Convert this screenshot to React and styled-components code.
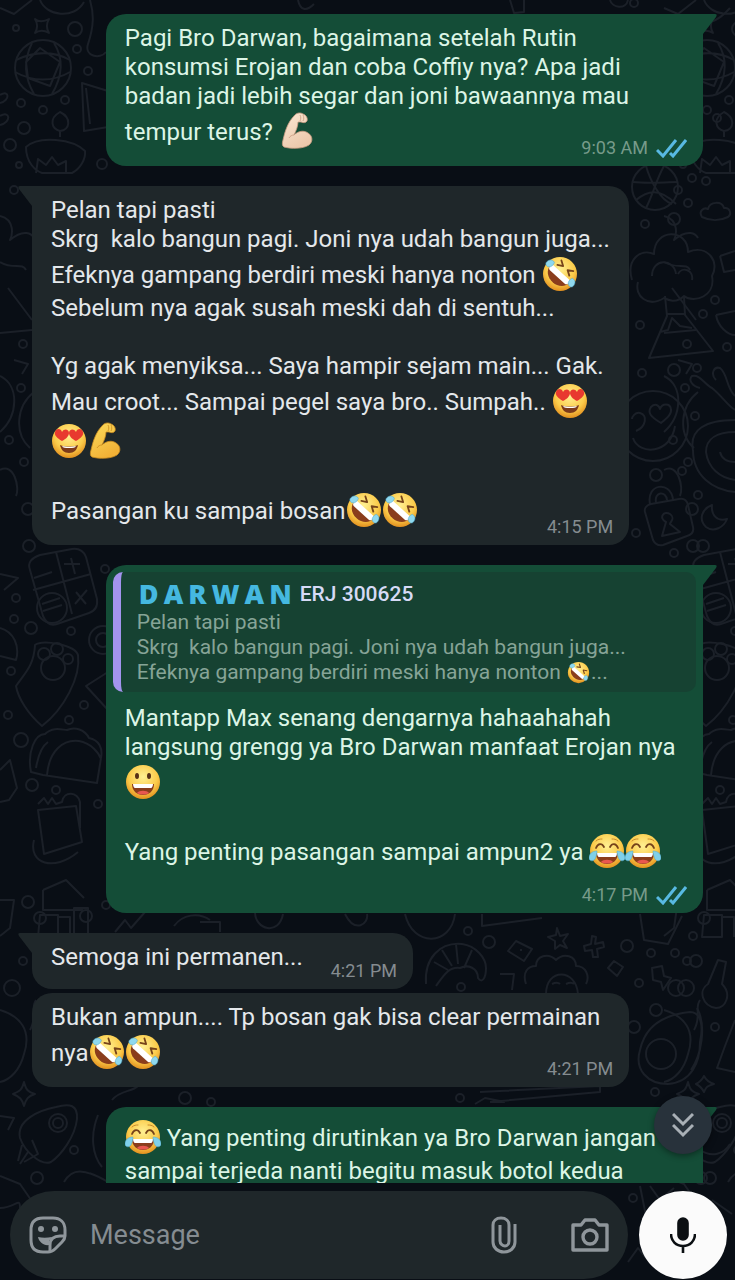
import { Fragment } from "react";
import styled, { createGlobalStyle } from "styled-components";

const GlobalStyle = createGlobalStyle`
    * {
        box-sizing: border-box;
    }

    body {
        margin: 0;
        background: #090e15;
        font-family: Roboto, "Liberation Sans", sans-serif;
    }
`;

const messages = [
    {
        out: true,
        tail: true,
        time: "9:03 AM",
        text: "Pagi Bro Darwan, bagaimana setelah Rutin konsumsi Erojan dan coba Coffiy nya? Apa jadi badan jadi lebih segar dan joni bawaannya mau tempur terus? 💪🏻",
    },
    {
        tail: true,
        time: "4:15 PM",
        text: "Pelan tapi pasti\nSkrg  kalo bangun pagi. Joni nya udah bangun juga...\nEfeknya gampang berdiri meski hanya nonton 🤣\nSebelum nya agak susah meski dah di sentuh...\n\nYg agak menyiksa... Saya hampir sejam main... Gak. Mau croot... Sampai pegel saya bro.. Sumpah.. 😍😍💪\n\nPasangan ku sampai bosan🤣🤣",
    },
    {
        out: true,
        tail: true,
        ownLine: true,
        time: "4:17 PM",
        quote: {
            brand: "DARWAN",
            name: "ERJ 300625",
            text: "Pelan tapi pasti\nSkrg  kalo bangun pagi. Joni nya udah bangun juga...\nEfeknya gampang berdiri meski hanya nonton 🤣...",
        },
        text: "Mantapp Max senang dengarnya hahaahahah langsung grengg ya Bro Darwan manfaat Erojan nya 😀\n\nYang penting pasangan sampai ampun2 ya 😂😂",
    },
    { tail: true, inline: true, joined: true, time: "4:21 PM", text: "Semoga ini permanen..." },
    {
        time: "4:21 PM",
        text: "Bukan ampun.... Tp bosan gak bisa clear permainan nya🤣🤣",
    },
    {
        out: true,
        tail: true,
        ownLine: true,
        text: "😂 Yang penting dirutinkan ya Bro Darwan jangan sampai terjeda nanti begitu masuk botol kedua",
    },
];

/* ---------- emoji ---------- */

const Tears = () => (
    <g fill="#7fd0ea" stroke="#4fa9cf" strokeWidth="0.5">
        <path d="M8 20C3 20 0 23 0 27c0 3 4 4 6 1 1-2 2-5 2-8z" />
        <path d="M28 20c5 0 8 3 8 7 0 3-4 4-6 1-1-2-2-5-2-8z" />
    </g>
);

const Grin = () => (
    <>
        <path d="M7 22h22c0 7-5 11-11 11S7 29 7 22z" fill="#8a3d1c" />
        <path d="M8 22h20c0 2-1 4-2 4H10c-1 0-2-2-2-4z" fill="#fff" />
        <path d="M12 31c2-3 10-3 12 0-3 2-9 2-12 0z" fill="#e8574f" />
    </>
);

const Face = ({ children }) => (
    <>
        <circle cx="18" cy="20" r="17" fill="url(#face)" />
        {children}
    </>
);

const Arm = ({ fill, line }) => (
    <g fill={fill} stroke={line} strokeWidth="0.8" strokeLinejoin="round">
        <path d="M15 5c2-3 6-4 9-2 3 1 5 4 4 7-1 2-4 2-6 1l-3 0c0 4-2 9-4 13 4-4 10-5 14-2 5 3 5 9 1 12-6 4-18 4-25 2-2-1-2-4-1-7C6 20 9 11 15 5z" />
        <path d="M21 4c1 2 1 4 0 6M24 4c1 2 1 4 0 6M10 27c1-2 3-3 5-3" fill="none" />
    </g>
);

const drawings = {
    "💪🏻": <Arm fill="url(#skin)" line="#c99b80" />,
    "💪": <Arm fill="url(#arm)" line="#c98a1e" />,
    "🤣": (
        <Face>
            <g transform="rotate(42 18 20)">
                <path d="M10 9l5 3-5 3M26 9l-5 3 5 3" fill="none" stroke="#76431a" strokeWidth="1.8" strokeLinecap="round" strokeLinejoin="round" />
                <path d="M5 19h26c0 8-6 12-13 12S5 27 5 19z" fill="#8a3d1c" />
                <path d="M5 18h26c0 4-1 6-3 6H8c-2 0-3-2-3-6z" fill="#fff" />
                <g fill="#8fd8ee" stroke="#4fa9cf" strokeWidth="0.5">
                    <path d="M6 15c-4-1-6 2-6 5s4 4 6 1c1-2 1-4 0-6z" />
                    <path d="M30 15c4-1 6 2 6 5s-4 4-6 1c-1-2-1-4 0-6z" />
                </g>
            </g>
        </Face>
    ),
    "😂": (
        <Face>
            <path d="M7 17c2-5 6-5 8-1M21 16c2-4 6-4 8 1" fill="none" stroke="#76431a" strokeWidth="1.8" strokeLinecap="round" />
            <path d="M7 10c2-2 4-2 6-2M23 8c2 0 4 0 6 2" fill="none" stroke="#c98a2c" strokeLinecap="round" />
            <Grin />
            <Tears />
        </Face>
    ),
    "😀": (
        <Face>
            <ellipse cx="12" cy="14" rx="2" ry="3" fill="#573016" />
            <ellipse cx="24" cy="14" rx="2" ry="3" fill="#573016" />
            <Grin />
        </Face>
    ),
    "😍": (
        <Face>
            <path d="M11 20c-5-3-8-6-7-9 1-4 6-4 7 0 2-4 7-3 7 1 0 3-3 6-7 8z" fill="#e8392f" />
            <path d="M25 20c5-3 8-6 7-9-1-4-6-4-7 0-2-4-7-3-7 1 0 3 3 6 7 8z" fill="#e8392f" />
            <path d="M9 24c5 2 13 2 18 0-1 5-4 8-9 8s-8-3-9-8z" fill="#7c3a1a" />
            <path d="M11 25c4 1 10 1 14 0-1 2-3 2-7 2s-6 0-7-2z" fill="#fff" />
        </Face>
    ),
};

const EmojiDefs = () => (
    <HiddenSvg aria-hidden="true">
        <defs>
            <radialGradient id="face" cx="0.5" cy="0.35" r="0.65">
                <stop offset="0" stopColor="#fff092" />
                <stop offset="0.65" stopColor="#fbcb4a" />
                <stop offset="1" stopColor="#e2901f" />
            </radialGradient>
            <linearGradient id="arm" x1="0" y1="0" x2="0.5" y2="1">
                <stop offset="0" stopColor="#fcdc5c" />
                <stop offset="1" stopColor="#f2b136" />
            </linearGradient>
            <linearGradient id="skin" x1="0" y1="0" x2="0.5" y2="1">
                <stop offset="0" stopColor="#fbe6d2" />
                <stop offset="1" stopColor="#ecc9ac" />
            </linearGradient>
        </defs>
    </HiddenSvg>
);

const emojiPattern = /(💪🏻|💪|🤣|😂|😀|😍)/u;

const RichText = ({ text, small }) =>
    text.split(emojiPattern).map((part, i) =>
        drawings[part] ? (
            <Emoji key={i} $small={small} viewBox="0 0 36 40" role="img" aria-label={part}>
                {drawings[part]}
            </Emoji>
        ) : (
            <Fragment key={i}>{part}</Fragment>
        )
    );

/* ---------- wallpaper ---------- */

const dots = [
    [16, 28, 3], [75, 29, 7], [77, 49, 4], [88, 71, 4], [21, 103, 4], [65, 100, 4], [43, 110, 4], [24, 128, 6],
    [10, 145, 6], [102, 164, 5], [19, 165, 3], [14, 190, 4], [23, 344, 4], [21, 388, 4], [9, 440, 4], [24, 462, 4],
    [28, 509, 6], [29, 546, 6], [16, 598, 4], [14, 619, 4], [31, 628, 6], [71, 631, 4], [105, 569, 4], [11, 671, 4],
    [84, 705, 4], [8, 715, 4], [69, 720, 4], [21, 740, 7], [32, 785, 6], [56, 790, 4], [98, 804, 4], [28, 902, 6],
    [106, 905, 4], [23, 961, 4], [12, 988, 8], [185, 1098, 6], [211, 1102, 4], [74, 1150, 4], [37, 1178, 6],
];

const rightDots = [
    [634, 3, 4], [717, 118, 4], [692, 178, 4], [688, 203, 4], [674, 219, 6], [645, 224, 4], [706, 181, 4],
    [715, 300, 4], [703, 314, 4], [640, 325, 4], [727, 347, 4], [674, 370, 6], [642, 373, 4], [697, 368, 4],
    [695, 416, 4], [656, 475, 6], [682, 471, 4], [698, 495, 4], [636, 533, 4], [703, 546, 6], [674, 553, 4],
    [468, 931, 4], [489, 942, 6], [627, 946, 6], [651, 953, 4], [675, 953, 4], [693, 936, 4], [696, 961, 6],
    [639, 983, 4], [686, 988, 8], [656, 1010, 6], [634, 1027, 6], [715, 1027, 4], [655, 1092, 4], [461, 987, 4],
    [460, 1098, 4], [710, 1178, 6], [633, 1198, 4],
];

const Wallpaper = () => (
    <Doodles viewBox="0 0 735 1280" preserveAspectRatio="xMidYMin slice" aria-hidden="true">
        <g id="shapes-left">
            {dots.map(([x, y, r], i) => (
                <circle key={i} cx={x} cy={y} r={r} />
            ))}
            <path d="M35 19c3 3 9 3 14 0-3 5-3 9 0 14-5-3-10-3-14 0 3-5 3-9 0-14z" />
            <circle cx="43" cy="68" r="28" />
            <path d="M16 60c17-8 36-10 54 0M15 72c18 10 38 10 55 0M32 43c-8 16-8 34 2 51M54 43c10 16 8 34-2 51M26 62l14-14 20 14-10 24-22-8z" />
            <path d="M40 0c6 16 34 20 44 2M90 0c4 14 4 26-2 44-4 12 12 16 18 8M0 8l14 6 18-14" />
            <path d="M82 83l26 8v36l-24 4zM86 88l4 36" />
            <path d="M26 147c0 16 10 24 16 26h30c8-4 14-14 13-22-12-12-46-16-59-4zM60 137v-6c-8-2-12-12 0-19 12 6 10 18 0 19M36 173l2-14 8 6 6-8 6 8 8-4v12" />
            <path d="M0 216c16 4 12 20 10 24 14-12 22-6 24-2M0 262c14 8 22 0 26 8M8 288l24 32M0 333l32-3M0 95c10-6 10 6 0 8M0 116c10-6 12 6 0 9" />
            <path d="M14 360l14 4-6 10M0 376c20 10 18 40 0 56M34 392c-18 14-20 42-4 56M0 470c14-8 20 18 16 26" />
            {/* keypad */}
            <path d="M30 570c-3-8 2-12 10-15l32-6c8-1 12 3 14 8l11 42c1 8-2 12-8 14l-32 11c-6 2-11-1-14-8zM56 552l16 62M33 590l58-16M34 578l18-6M64 564h16M71 558l4 16M76 592l10 12M87 590l-12 14" />
            <circle cx="52" cy="608" r="15" />
            <path d="M42 604l18-6M43 611l19-6" />
            {/* nest */}
            <path d="M35 645c8-6 40 0 43 10 3 22-14 54-36 71-14-12-24-28-26-40 8-12 18-20 19-41z" />
            <circle cx="53" cy="668" r="12" />
            <circle cx="44" cy="654" r="6" />
            <circle cx="57" cy="649" r="6" />
            <circle cx="68" cy="659" r="5" />
            <path d="M0 628c14 4 20 18 16 32L0 656M0 574l18 4L4 590" />
            <circle cx="103" cy="640" r="14" />
            <circle cx="103" cy="640" r="7" />
            <path d="M108 672l-22 14 22 24" />
            {/* taco */}
            <path d="M31 772c-4-20 4-38 14-38 8-8 18-4 22-4 8-4 18 0 22 8 10 2 14 10 12 20l-4 25-54-8zM47 775c2-24 16-36 32-34 12 2 20 12 22 18M36 768c2-12 6-22 12-26" />
            <path d="M0 770l10-10 7 28-8 12-9 2M38 804l6-6 4 6 4-6 4 6 6-2c2-12 16-10 18 0v26M38 810l38-4 6 36-38 12zM34 840c-6 24 20 32 44 12" />
            <path d="M0 900h14l-4 28-10 8M43 890l23-10 18 18M43 890v20h40M40 915h18v22H38zM58 917h12v20M74 908h14v30H74z" />
            <circle cx="40" cy="918" r="6" />
            <circle cx="86" cy="916" r="6" />
            <path d="M115 932l10-12 6 8 14-16M210 920a26 26 0 0 0-36 6M200 922h20v10M255 912c0 18 24 24 28 2M36 1000c-6 8 2 16-6 30M0 1010c20 6 32 20 24 44-4 16-14 26-24 28" />
            <path d="M24 1082c2 8 4 10 11 12-7 2-9 5-11 12-2-7-4-9-11-12 7-3 9-4 11-12z" />
            {/* rocket */}
            <path d="M20 1138c-4-18 20-28 36-31 14-4 22-2 21 12-2 18-16 36-26 43-10 4-26-10-31-24zM22 1145l-4 16M28 1152l-8 12M32 1140l6 14-14 8" />
            <circle cx="58" cy="1123" r="9" />
            <circle cx="58" cy="1123" r="5" />
            <path d="M0 1116l14 2-6 12M98 1115c-8 20-6 40 4 52M64 1182c8-14 20-14 44 0M112 1100c8-10 20-8 26-14M0 1176l20 8 18 26M0 1208c16 0 20-12 20 0" />
        </g>
        <use href="#shapes-left" x="664" />
        <g>
            {rightDots.map(([x, y, r], i) => (
                <circle key={i} cx={x} cy={y} r={r} />
            ))}
            <circle cx="655" cy="187" r="23" />
            <path d="M633 182c16 2 32 0 44 0M646 166c4 14 14 34 26 38M664 166c-8 14-10 26-18 42M636 200c12-10 24-12 40 4" />
            <path d="M702 217c-4-6 2-10 6-8 2-8 14-8 16-1 6-1 8 6 4 9-8 4-18 4-26 0z" />
            <path d="M632 280c-6-20 8-32 22-26 0-26 34-26 34-2 20-8 32 10 24 24 4 20-18 28-28 20-8 8-16 4-20 2-16 10-30-2-26-16M652 276c0-18 22-18 24-2M678 274c4-8 16-4 14 6" />
            <path d="M665 296l2 20-18 42 64-7-28-36-1-18M667 314h18M660 332l8-2 4-12 8 8 12 2" />
            <path d="M720 256l15-5M720 256l4 16 11-2M716 315c2 12 12 20 19 20M716 315l19-4" />
            <circle cx="653" cy="426" r="35" />
            <path d="M633 438c6 18 38 16 42-12M661 423c-10-6-14-10-10-16 4-4 8-2 9 2 2-6 10-6 11 0 1 5-4 9-10 14zM636 431c10-4 12-16 4-18-5-1-8 4-8 6" />
            <path d="M700 388c-8-2-12-8-8-12 8-2 12 8 20 12 10 8 16 18 23 22M716 380c-6-6-2-14 4-12 8 6 6 20 15 28M693 450c-4-20 12-30 42-30M693 450c0 26 20 40 42 42M706 452c0-14 12-20 29-20M706 452c2 16 14 26 29 28M720 452c2 8 8 10 15 10" />
            {/* padlock */}
            <path d="M645 512c-1-4 2-7 6-8l28-5c5-1 8 2 9 6l5 22c1 5-2 8-6 9l-24 9c-5 1-8-1-10-5zM650 504c-4-20 20-24 23-5M656 502c-2-10 10-12 11-2M662 536l4-14c-8-4-2-12 4-8 6 4 0 8 0 10l10 8z" />
            <path d="M712 505c-10 4-14 14-6 22 8 6 18 0 21-8-10 3-16-4-15-14z" />
            <path d="M690 20c14 6 26 4 40-12M510 0l4 13 10-1V0M610 0c2 8 16 10 18 0M298 0c2 10 8 12 16 4" />
            <path d="M345 914c10 20 24 10 22 0M405 914c8 34 46 32 50 0M482 914v12l60-8M640 914l4 26 24 4 14-28" />
            {/* croissant */}
            <path d="M426 984c-2-26 14-42 36-40 14 2 24 14 24 24 0 10-4 16-8 10 0-10-10-14-18-10-12-2-18 10-24 18M434 962l14 8M442 950l10 16M456 944l2 20M472 950l-8 18" />
            <path d="M508 951l8-10 16 8-8 12zM520 950h2M557 928l3 8 8-2-5 7 4 7-7-3-5 4v-8l-7-4 8-2zM592 936l4 1-1 7 8-2 1 5-7 2 1 8-5 0-1-7-7 1-1-5 7-2zM608 968l6-7 9 6-6 9zM652 968l10-2 2 10 7 2-8 12-2-8-8-2z" />
            <path d="M526 984c-4-12 2-18 10-18 0-10 12-14 20-6 8-8 20-4 20 6 10 0 14 10 10 18M546 994c0-26 30-26 32 0M552 984c4-2 6-2 8 0M566 984c4-2 6-2 8 0M500 974h14l-2 16" />
            {/* avocado */}
            <path d="M640 1050c-6 20 8 34 28 34 24-2 32-22 32-42 4-18 0-30-10-30-20 2-44 10-50 38zM697 1008c10 18 4 48-6 62" />
            <circle cx="661" cy="1054" r="15" />
            <path d="M718 960l8 2-4 22c10 10 4 24-6 24-14-2-18-18-8-24zM735 1020l-10 26-8 22 18 4" />
            <path d="M704 1092c2-4 2-6 10-8-6-2-8-4-10-8-2 4-4 6-8 8 4 2 6 4 8 8zM475 1104l10-6 20 4M480 1092l120-6v6l-110 10" />
            <path d="M640 1186l6 30M650 1186l10 14 14-12M712 1200l20 14M628 1262l10-14 8 10M700 1150c12 8 24 4 30-6" />
        </g>
    </Doodles>
);

/* ---------- chat parts ---------- */

const ReadTicks = () => (
    <svg width="31" height="20" viewBox="0 0 31 20" fill="none" stroke="#58b9e2" strokeWidth="3" role="img" aria-label="Read">
        <path d="M1 12l6 6L20 2M14 15l3 3L30 2" />
    </svg>
);

const Tail = ({ out }) => (
    <TailSvg $out={out} viewBox="0 0 14 20" aria-hidden="true">
        <path d={out ? "M0 0h12c2 0 2 1 1 3L0 20z" : "M14 0H2C0 0 0 1 1 3l13 17z"} />
    </TailSvg>
);

const Quote = ({ brand, name, text }) => (
    <QuoteBox>
        <QuoteHead>
            <Brand aria-label={brand}>
                {brand.split("").map((letter, i) => (
                    <span key={i}>{letter}</span>
                ))}
            </Brand>
            <span>{name}</span>
        </QuoteHead>
        {text.split("\n").map((line, i) => (
            <QuoteLine key={i}>
                <RichText text={line} small />
            </QuoteLine>
        ))}
    </QuoteBox>
);

const Message = ({ out, tail, inline, joined, ownLine, time, text, quote }) => (
    <Bubble $out={out} $tail={tail} $inline={inline} $joined={joined}>
        {tail && <Tail out={out} />}
        {quote && <Quote {...quote} />}
        <Body $inline={inline}>
            <RichText text={text} />
        </Body>
        <Meta $out={out} $inline={inline} $ownLine={ownLine}>
            {time && <time>{time}</time>}
            {out && <ReadTicks />}
        </Meta>
    </Bubble>
);

function App() {
    return (
        <Page>
            <GlobalStyle />
            <EmojiDefs />
            <Wallpaper />
            <Chat>
                {messages.map((message, i) => (
                    <Message key={i} {...message} />
                ))}
            </Chat>
            <Composer>
                <ScrollButton type="button" aria-label="Scroll to latest">
                    <svg width="22" height="26" viewBox="0 0 22 26" fill="none" stroke="#a9b0b6" strokeWidth="3">
                        <path d="M1 2l10 10L21 2M1 13l10 10 10-10" />
                    </svg>
                </ScrollButton>
                <Field>
                    <IconButton type="button" aria-label="Stickers">
                        <svg width="38" height="38" viewBox="0 0 38 38" fill="none" stroke="currentColor" strokeWidth="3" strokeLinejoin="round">
                            <path d="M36 20v-6C36 6 31 2 24 2H14C6 2 2 6 2 14v10c0 8 4 12 12 12h5c3 0 5-1 7-3l7-7c2-2 3-3 3-6z" />
                            <path d="M36 20h-5c-6 0-10 3-10 9v7" />
                            <path d="M9 21c4 1 9 1 14 0l-3 4v4c-5 1-10-3-11-8z" fill="currentColor" stroke="none" />
                            <circle cx="12" cy="13" r="3" fill="currentColor" stroke="none" />
                            <circle cx="26" cy="13" r="3" fill="currentColor" stroke="none" />
                        </svg>
                    </IconButton>
                    <Input type="text" placeholder="Message" aria-label="Message" />
                    <IconButton type="button" aria-label="Attach">
                        <svg width="26" height="38" viewBox="0 0 26 38" fill="none" stroke="currentColor" strokeWidth="3">
                            <path d="M24 8v18c0 6-5 10-11 10S2 32 2 26V9c0-4 3-7 8-7s8 3 8 7v16c0 3-2 5-4 5s-5-2-5-5V9" />
                        </svg>
                    </IconButton>
                    <IconButton type="button" aria-label="Camera">
                        <svg width="38" height="34" viewBox="0 0 38 34" fill="none" stroke="currentColor" strokeWidth="3.4" strokeLinejoin="round">
                            <path d="M2 7h8l4-5h10l4 5h8v25H2z" />
                            <circle cx="19" cy="19" r="7" />
                        </svg>
                    </IconButton>
                </Field>
                <MicButton type="button" aria-label="Record voice message">
                    <svg width="26" height="36" viewBox="0 0 26 36" fill="none" stroke="#0b0f12" strokeWidth="2.6">
                        <rect x="8" y="1" width="10" height="22" rx="5" fill="#0b0f12" stroke="#0b0f12" strokeWidth="1.6" />
                        <path d="M1 17c0 7 5 12 12 12s12-5 12-12M13 29v7" />
                    </svg>
                </MicButton>
            </Composer>
        </Page>
    );
}

export default App;

const Page = styled.main`
    position: relative;
    display: flex;
    flex-direction: column;
    height: 100vh;
    overflow: hidden;
`;

const HiddenSvg = styled.svg`
    position: absolute;
    width: 0;
    height: 0;
`;

const Doodles = styled.svg`
    position: absolute;
    inset: 0;
    width: 100%;
    height: 100%;
    fill: none;
    stroke: #1b2028;
    stroke-width: 2;
    stroke-linejoin: round;
`;

const Chat = styled.section`
    position: relative;
    flex: 1;
    min-height: 0;
    display: flex;
    flex-direction: column;
    align-items: flex-start;
    padding: 14px 32px 0;
    overflow: hidden;
`;

const Bubble = styled.article`
    position: relative;
    flex-shrink: 0;
    display: ${({ $inline }) => ($inline ? "flex" : "block")};
    align-items: flex-end;
    gap: 16px;
    width: ${({ $inline }) => ($inline ? "auto" : "89%")};
    align-self: ${({ $out }) => ($out ? "flex-end" : "flex-start")};
    margin-bottom: ${({ $joined }) => ($joined ? 4 : 20)}px;
    padding: 7px 7px 8px;
    border-radius: 20px;
    border-top-right-radius: ${({ $out, $tail }) => ($out && $tail ? 0 : 20)}px;
    border-top-left-radius: ${({ $out, $tail }) => (!$out && $tail ? 0 : 20)}px;
    background: ${({ $out }) => ($out ? "#144d37" : "#1f272a")};
    color: ${({ $out }) => ($out ? "#dcf5e6" : "#e4e8eb")};
    fill: ${({ $out }) => ($out ? "#144d37" : "#1f272a")};
`;

const TailSvg = styled.svg`
    position: absolute;
    top: 0;
    width: 14px;
    height: 20px;
    ${({ $out }) => ($out ? "left: 100%;" : "right: 100%;")}
`;

const Body = styled.p`
    margin: 0;
    padding: 3px 12px ${({ $inline }) => ($inline ? 9 : 0)}px 12px;
    font-size: 24px;
    line-height: 29px;
    white-space: pre-wrap;
`;

const Emoji = styled.svg`
    width: ${({ $small }) => ($small ? 25 : 36)}px;
    height: ${({ $small }) => ($small ? 25 : 40)}px;
    vertical-align: ${({ $small }) => ($small ? -6 : -11)}px;
`;

const Meta = styled.footer`
    display: flex;
    justify-content: flex-end;
    align-items: center;
    gap: 8px;
    height: 20px;
    margin-top: ${({ $inline, $ownLine }) => ($inline ? 0 : $ownLine ? 14 : -13)}px;
    padding-right: 9px;
    font-size: 18px;
    line-height: 20px;
    color: ${({ $out }) => ($out ? "#779b8a" : "#858c90")};
`;

const QuoteBox = styled.blockquote`
    margin: 0 0 9px;
    padding: 6px 8px 7px 16px;
    border-left: 8px solid #a394ee;
    border-radius: 10px;
    background: #164232;
    color: #86a497;
`;

const QuoteHead = styled.header`
    display: flex;
    align-items: center;
    gap: 8px;
    height: 32px;
    font-size: 21px;
    font-weight: 500;
    color: #d6daf6;
`;

const Brand = styled.strong`
    display: flex;
    gap: 5px;
    padding-left: 2px;
    font-family: "Open Sans", sans-serif;
    font-size: 27px;
    font-weight: 800;
    line-height: 32px;
    color: #45b8e0;
`;

const QuoteLine = styled.p`
    height: 25px;
    margin: 0;
    font-size: 21px;
    line-height: 25px;
    white-space: pre-wrap;
`;

const Composer = styled.footer`
    position: relative;
    display: flex;
    align-items: center;
    gap: 11px;
    padding: 8px 8px 1px 10px;
`;

const Field = styled.div`
    flex: 1;
    display: flex;
    align-items: center;
    height: 88px;
    padding: 0 19px;
    border-radius: 44px;
    background: #1f272a;
`;

const IconButton = styled.button`
    display: flex;
    padding: 0;
    border: 0;
    background: none;
    color: #8f969b;
    cursor: pointer;

    & + & {
        margin-left: 54px;
    }
`;

const Input = styled.input`
    flex: 1;
    min-width: 0;
    padding: 0 23px;
    border: 0;
    outline: 0;
    background: none;
    color: #e4e8eb;
    font-family: inherit;
    font-size: 27px;

    &::placeholder {
        color: #858c91;
    }
`;

const MicButton = styled.button`
    display: flex;
    align-items: center;
    justify-content: center;
    width: 88px;
    height: 88px;
    padding: 0;
    border: 0;
    border-radius: 50%;
    background: #fbfbfb;
    cursor: pointer;
`;

const ScrollButton = styled.button`
    position: absolute;
    right: 23px;
    bottom: 126px;
    display: flex;
    align-items: center;
    justify-content: center;
    width: 58px;
    height: 58px;
    padding: 0;
    border: 0;
    border-radius: 50%;
    background: #28323b;
    box-shadow: 0 2px 6px rgba(0, 0, 0, 0.4);
    cursor: pointer;
`;
